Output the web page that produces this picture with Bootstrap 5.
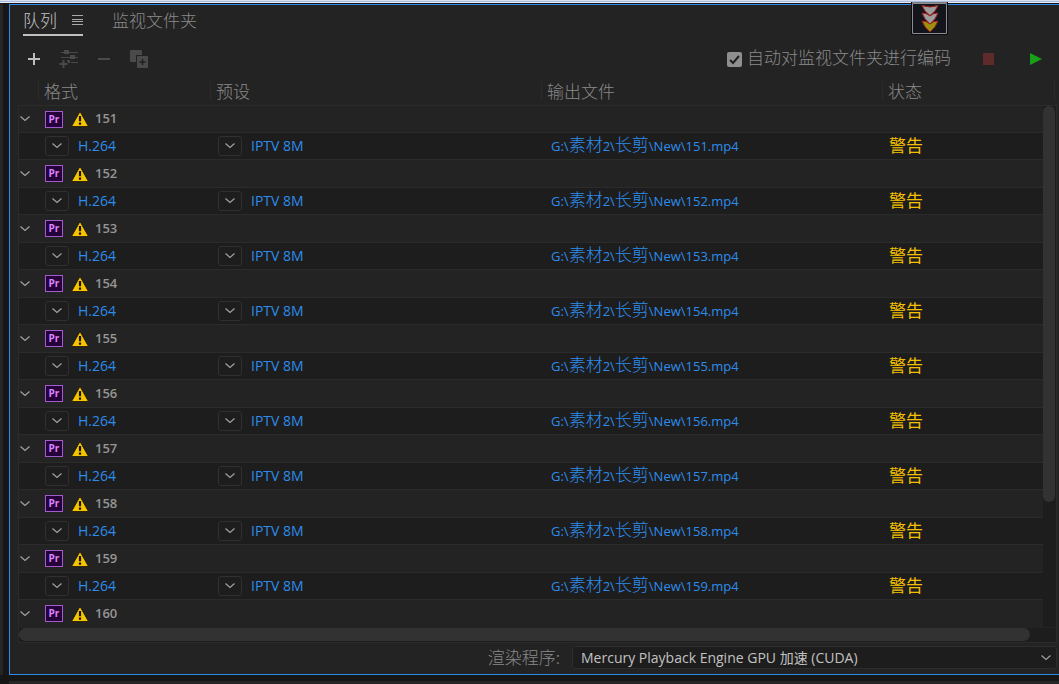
<!DOCTYPE html>
<html lang="zh-CN">
<head>
<meta charset="utf-8">
<meta name="viewport" content="width=device-width, initial-scale=1">
<title>队列</title>
<link rel="stylesheet" href="https://cdn.jsdelivr.net/npm/bootstrap@5.3.0/dist/css/bootstrap.min.css">
<style>
  :root {
    --shell: #161616; --panel: #232323; --well: #1d1d1d; --line: #2b2b2b;
    --accent: #2d8ceb; --dim: #8a8a8a; --thumb: #323232;
  }
  body { background: var(--shell); color: var(--dim); font: 14px/20px "Open Sans", "Noto Sans CJK SC", sans-serif; }
  .zh { font-family: "Noto Sans CJK SC", sans-serif; font-size: 17px; line-height: 20px; font-weight: 300; }
  button { background: none; border: 0; padding: 0; color: inherit; }
  svg { display: block; }
  .window-edge { height: 3px; background: linear-gradient(#d5def0 0 1px, #a9b9da 1px 2px, #e6ebf5 2px); margin-bottom: 1px; }
  .dock-left { width: 3px; margin-right: 6px; background: #262626; }
  .dock-bottom { height: 3px; margin: 6px 0 0 9px; background: #262626; }
  .queue-panel { background: var(--panel); border: 1px solid var(--accent); border-right: 0; min-width: 0; }

  .tab-strip { padding: 5px 13px 0; gap: 29px; height: 32px; }
  .tab-strip button { height: 26px; padding-bottom: 4px; display: flex; align-items: center; gap: 15px; border-bottom: 2px solid transparent; }
  .tab-strip .current { color: #c4c4c4; border-color: #c0c0c0; }
  .tool-row { height: 44px; padding: 0 16px 0 12px; }
  .tool-row .tools { gap: 11px; }
  .tool-row .tools button { width: 24px; height: 24px; display: grid; place-items: center; }
  .run-tools { gap: 34px; }
  .auto-check { gap: 5px; margin-right: 31px; }
  .auto-check label { padding-bottom: 4px; }
  .auto-check .form-check-input { width: 15px; height: 15px; margin: 0; border-radius: 2px; border: 0; background-color: #8f8f8f; box-shadow: none;
    background-size: 15px 15px; background-image: url("data:image/svg+xml,%3Csvg xmlns='http://www.w3.org/2000/svg' viewBox='0 0 15 15'%3E%3Cpath d='M3 8l3 3 6-7' fill='none' stroke='%23202020' stroke-width='2'/%3E%3C/svg%3E"); }

  .list-area { padding: 0 2px 0 8px; }
  .queue { table-layout: fixed; border-collapse: separate; border-spacing: 0; width: 100%; }
  .queue th, .queue td { padding: 0; vertical-align: middle; font-weight: 400; }
  .queue th { height: 24px; vertical-align: top; }
  .queue th span { display: block; height: 20px; padding-left: 5px; border-left: 1px solid var(--line); font-weight: 300; }
  .queue th:first-child span { margin-left: 20px; }
  .col-format { width: 192px; } .col-preset { width: 331px; } .col-output { width: 341px; }
  .queue td { border-top: 1px solid var(--line); }
  .queue td:first-child { border-left: 1px solid var(--line); }
  .group-row { height: 28px; }
  .group-row:first-child { height: 27px; }
  .item-row { height: 27px; background: var(--well); }
  .group-row td > div { gap: 8px; }
  .group-row .fold { width: 26px; }
  .group-name { font-size: 13px; line-height: 18px; padding-bottom: 2px; font-weight: 600; color: #959595; margin-left: -2px; }
  .pr-mark { width: 18px; height: 17px; border: 1px solid #a35bd0; background: #25003a; color: #dd85ff; font: 700 10px/15px "Open Sans", sans-serif; text-align: center; }
  .pick { width: 24px; height: 20px; border: 1px solid #303030; border-radius: 3px; display: grid; place-items: center; background: var(--well); }
  .item-row a { color: var(--accent); text-decoration: none; white-space: nowrap; }
  .cell-format { padding-left: 26px; gap: 9px; }
  .cell-preset { padding-left: 8px; gap: 9px; }
  .cell-output { padding: 0 0 2px 10px; font-size: 13px; }
  .cell-state { padding: 0 0 2px 7px; color: #f5c000; }
  .cell-state .zh { font-weight: 400; }

  .v-side { width: 14px; }
  .v-head { height: 24px; }
  .v-head i { display: block; height: 20px; width: 12px; border-right: 1px solid var(--line); }
  .v-track { background: var(--well); border-top: 1px solid var(--line); border-right: 1px solid var(--line); }
  .v-thumb { height: 76%; width: 12px; border-radius: 6px; background: var(--thumb); }
  .h-track { height: 15px; background: var(--well); border: 1px solid var(--line); border-top: 0; }
  .h-thumb { height: 13px; width: 97.5%; border-radius: 7px; background: var(--thumb); margin-top: 1px; }

  .render-row { padding: 3px 2px 5px 0; gap: 12px; }
  .render-row label { width: 550px; text-align: right; padding-bottom: 2px; }
  .render-row .form-select { height: 23px; padding: 0 24px 0 8px; border: 1px solid #2d2d2d; border-radius: 3px; background-color: var(--well); color: #c2c2c2; font: inherit; line-height: 20px;
    background-position: right 4px center; background-size: 12px 8px; background-image: url("data:image/svg+xml,%3Csvg xmlns='http://www.w3.org/2000/svg' viewBox='0 0 12 8'%3E%3Cpath d='M1.500 1.500l4.500 4 4.500-4' fill='none' stroke='%23a0a0a0' stroke-width='1.200'/%3E%3C/svg%3E"); }
  .drop-badge { top: 2px; right: 111px; }
</style>
</head>
<body>
<svg class="d-none">
  <symbol id="chev" viewBox="0 0 12 8"><path d="M1.500 1.500L6 5.500l4.500-4" fill="none" stroke="#a2a2a2" stroke-width="1.200"/></symbol>
  <symbol id="warn" viewBox="0 0 18 16"><path d="M9 .5L17.500 15.500H.5z" fill="#f7c400" stroke="#15120a" stroke-width=".8"/><path d="M7.900 5h2.200v5.200H7.900zM7.900 11.500h2.200v2.200H7.900z" fill="#17130a"/></symbol>
</svg>

<div class="d-flex flex-column min-vh-100 position-relative">
  <div class="window-edge"></div>
  <div class="d-flex flex-grow-1">
    <div class="dock-left flex-shrink-0"></div>
    <main class="queue-panel flex-grow-1 d-flex flex-column">
      <nav class="tab-strip d-flex align-items-start">
        <button type="button" class="current zh">队列
          <svg width="11" height="10" viewBox="0 0 11 10"><path d="M0 .5h11M0 4.500h11M0 6.500h11M0 9.500h11" stroke="#a8a8a8"/></svg>
        </button>
        <button type="button" class="zh">监视文件夹</button>
      </nav>

      <div class="tool-row d-flex align-items-center justify-content-between">
        <div class="tools d-flex">
          <button type="button" aria-label="添加"><svg width="12" height="12"><path d="M6 0v12M0 6h12" stroke="#bebebe" stroke-width="2"/></svg></button>
          <button type="button" aria-label="添加输出"><svg width="20" height="18" viewBox="0 0 20 18"><path d="M2 2.500h17M2 7.500h17M12 12.500h7" stroke="#4a4a4a"/><path d="M5 0h5v4H5zM11 5h5v4h-5zM8 10h3v3H9z" fill="#4a4a4a"/><path d="M4.500 10v8M.5 14h8" stroke="#4a4a4a" stroke-width="2"/></svg></button>
          <button type="button" aria-label="移除"><svg width="12" height="12"><path d="M0 6h12" stroke="#4a4a4a" stroke-width="2"/></svg></button>
          <button type="button" aria-label="复制"><svg width="18" height="18" viewBox="0 0 18 18"><rect width="12" height="12" rx="1" fill="#4a4a4a"/><rect x="6" y="5" width="12" height="13" fill="#232323"/><rect x="7" y="6" width="11" height="12" rx="1" fill="#4a4a4a"/><path d="M12.500 9v6M9.500 12h6" stroke="#202020" stroke-width="1.500"/></svg></button>
        </div>
        <div class="d-flex align-items-center">
          <div class="auto-check d-flex align-items-center">
            <input class="form-check-input" type="checkbox" id="auto" checked>
            <label class="zh" for="auto">自动对监视文件夹进行编码</label>
          </div>
          <div class="run-tools d-flex">
            <button type="button" aria-label="停止"><svg width="13" height="12"><path d="M1 0h11v12H1z" fill="#5e2a2a"/></svg></button>
            <button type="button" aria-label="启动"><svg width="14" height="12"><path d="M1 0l12 6-12 6z" fill="#18a018"/></svg></button>
          </div>
        </div>
      </div>

      <section class="list-area">
        <div class="d-flex">
          <table class="queue">
            <colgroup><col class="col-format"><col class="col-preset"><col class="col-output"><col></colgroup>
            <thead><tr class="zh"><th><span>格式</span></th><th><span>预设</span></th><th><span>输出文件</span></th><th><span>状态</span></th></tr></thead>
            <tbody id="jobs"></tbody>
          </table>
          <div class="v-side d-flex flex-column flex-shrink-0">
            <div class="v-head"><i></i></div>
            <div class="v-track flex-grow-1"><div class="v-thumb"></div></div>
          </div>
        </div>
        <div class="h-track"><div class="h-thumb"></div></div>
      </section>

      <div class="render-row d-flex align-items-center">
        <label class="zh flex-shrink-0" for="engine">渲染程序:</label>
        <select class="form-select" id="engine"><option>Mercury Playback Engine GPU 加速 (CUDA)</option></select>
      </div>
    </main>
  </div>
  <div class="dock-bottom"></div>
  <div class="drop-badge position-absolute">
    <svg width="37" height="33" viewBox="0 0 37 33"><path d="M0 0h37v33H0z" fill="#0c0c0c"/><path d="M1.500 1.500h34v30h-34z" fill="#14141c" stroke="#8d8d8d"/><path d="M1 .5h35" stroke="#747c88"/><g stroke="#a01c1c"><path d="M11 3.500q8 3 16 0-2 6-8 10-6-4-8-10z" fill="#9d9d9d"/><path d="M11 11q5 0 8 3 3-3 8-3-2 6-8 11-6-5-8-11z" fill="#9d9d9d"/><path d="M11 19q5 0 8 3 3-3 8-3-2 6-8 11-6-5-8-11z" fill="#9a920c"/></g></svg>
  </div>
</div>

<script>
  const chevron = '<svg width="12" height="8"><use href="#chev"/></svg>';
  const groupRow = n => `<tr class="group-row"><td colspan="4"><div class="d-flex align-items-center">
    <div class="d-flex align-items-center"><button type="button" class="fold" aria-label="折叠 ${n}">${chevron}</button><span class="pr-mark">Pr</span></div>
    <svg width="18" height="16"><use href="#warn"/></svg><span class="group-name">${n}</span></div></td></tr>`;
  const itemRow = n => `<tr class="item-row">
    <td><div class="cell-format d-flex align-items-center"><button type="button" class="pick" aria-label="格式">${chevron}</button><a href="#">H.264</a></div></td>
    <td><div class="cell-preset d-flex align-items-center"><button type="button" class="pick" aria-label="预设">${chevron}</button><a href="#">IPTV 8M</a></div></td>
    <td><div class="cell-output d-flex align-items-center"><a href="#">G:\\<span class="zh">素材</span>2\\<span class="zh">长剪</span>\\New\\${n}.mp4</a></div></td>
    <td><div class="cell-state d-flex align-items-center"><span class="zh">警告</span></div></td></tr>`;
  let rows = '';
  for (let n = 151; n <= 160; n++) rows += groupRow(n) + (n < 160 ? itemRow(n) : '');
  document.getElementById('jobs').innerHTML = rows;
</script>
<script src="https://cdn.jsdelivr.net/npm/bootstrap@5.3.0/dist/js/bootstrap.bundle.min.js"></script>
</body>
</html>
